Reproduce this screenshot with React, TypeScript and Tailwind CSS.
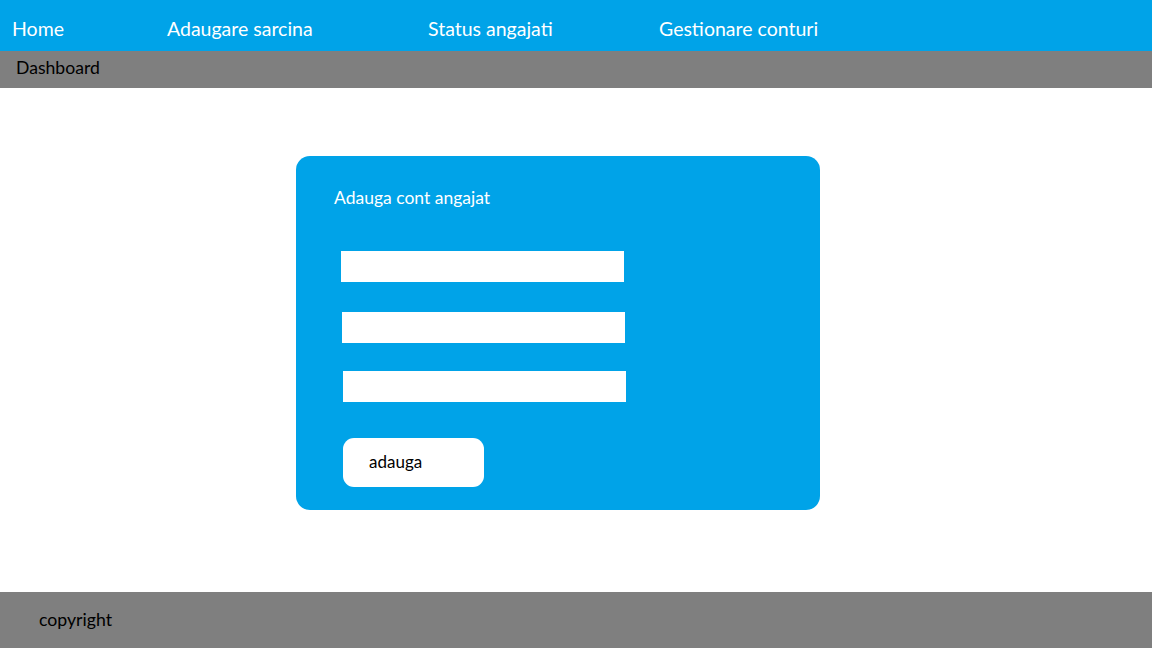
export default function App() {
  const font = { fontFamily: "Lato, 'Open Sans', sans-serif" };
  return (
    <div className="w-[1152px] h-[648px] flex flex-col bg-white" style={font}>
      <nav className="h-[51px] bg-[#00a3e8] flex items-center pt-[6px] text-white text-[19.5px] shrink-0">
        <span className="ml-[12px] w-[155px]">Home</span>
        <span className="w-[261px]">Adaugare sarcina</span>
        <span className="w-[231px]">Status angajati</span>
        <span>Gestionare conturi</span>
      </nav>
      <div className="h-[37px] bg-[#7f7f7f] flex items-center pl-[16px] pb-[2px] text-[17.6px] text-black shrink-0">
        Dashboard
      </div>
      <main className="flex-1 pt-[68px] pl-[296px]">
        <div className="w-[524px] h-[354px] bg-[#00a3e8] rounded-[14px] flex flex-col items-start pl-[45px] pt-[30px]">
          <div className="-ml-[7px] h-[24px] leading-[24px] text-white text-[17.5px]">Adauga cont angajat</div>
          <input className="mt-[41px] w-[283px] h-[31px] bg-white outline-none" />
          <input className="mt-[30px] ml-[1px] w-[283px] h-[31px] bg-white outline-none" />
          <input className="mt-[28px] ml-[2px] w-[283px] h-[31px] bg-white outline-none" />
          <button className="mt-[36px] ml-[2px] w-[141px] h-[49px] bg-white rounded-[11px] text-black text-[17px] text-left pl-[26px] pb-[1px]">
            adauga
          </button>
        </div>
      </main>
      <footer className="h-[56px] bg-[#7f7f7f] flex items-center pl-[39px] text-[17.7px] text-black shrink-0">
        copyright
      </footer>
    </div>
  );
}
